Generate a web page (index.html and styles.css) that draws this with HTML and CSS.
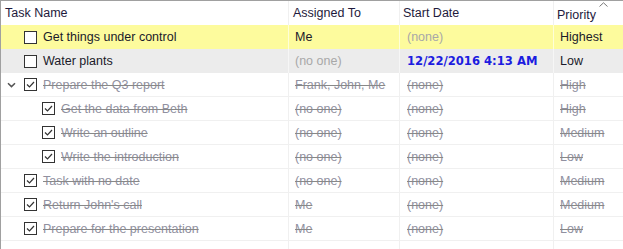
FILE: index.html
```html
<!DOCTYPE html>
<html>
<head>
<meta charset="utf-8">
<link rel="stylesheet" href="styles.css">
</head>
<body>
<div class="grid">
  <div class="row head">
    <div class="c c1">Task Name</div>
    <div class="c c2">Assigned To</div>
    <div class="c c3">Start Date</div>
    <div class="c c4 prio">Priority
      <svg class="sort" width="9" height="5" viewBox="0 0 9 5"><path d="M0.5 4.5 L4.5 0.8 L8.5 4.5" fill="none" stroke="#777" stroke-width="1"/></svg>
    </div>
  </div>

  <div class="row sel">
    <div class="c c1 lv0"><span class="box"></span><span class="t">Get things under control</span></div>
    <div class="c c2"><span class="t">Me</span></div>
    <div class="c c3"><span class="t muted">(none)</span></div>
    <div class="c c4"><span class="t">Highest</span></div>
  </div>

  <div class="row hov">
    <div class="c c1 lv0"><span class="box"></span><span class="t">Water plants</span></div>
    <div class="c c2"><span class="t muted">(no one)</span></div>
    <div class="c c3"><span class="t date">12/22/2016 4:13 AM</span></div>
    <div class="c c4"><span class="t">Low</span></div>
  </div>

  <div class="row done">
    <div class="c c1 lv0 has-toggle">
      <span class="toggle"><svg width="9" height="6" viewBox="0 0 9 6"><path d="M1 1.2 L4.5 4.6 L8 1.2" fill="none" stroke="#555" stroke-width="1.5"/></svg></span>
      <span class="box on"><svg width="11" height="11" viewBox="0 0 11 11"><path d="M2 5.5 L4.5 8 L9 3" fill="none" stroke="#333" stroke-width="1.2"/></svg></span><span class="t">Prepare the Q3 report</span></div>
    <div class="c c2"><span class="t">Frank, John, Me</span></div>
    <div class="c c3"><span class="t">(none)</span></div>
    <div class="c c4"><span class="t">High</span></div>
  </div>

  <div class="row done">
    <div class="c c1 lv1"><span class="box on"><svg width="11" height="11" viewBox="0 0 11 11"><path d="M2 5.5 L4.5 8 L9 3" fill="none" stroke="#333" stroke-width="1.2"/></svg></span><span class="t">Get the data from Beth</span></div>
    <div class="c c2"><span class="t">(no one)</span></div>
    <div class="c c3"><span class="t">(none)</span></div>
    <div class="c c4"><span class="t">High</span></div>
  </div>

  <div class="row done">
    <div class="c c1 lv1"><span class="box on"><svg width="11" height="11" viewBox="0 0 11 11"><path d="M2 5.5 L4.5 8 L9 3" fill="none" stroke="#333" stroke-width="1.2"/></svg></span><span class="t">Write an outline</span></div>
    <div class="c c2"><span class="t">(no one)</span></div>
    <div class="c c3"><span class="t">(none)</span></div>
    <div class="c c4"><span class="t">Medium</span></div>
  </div>

  <div class="row done">
    <div class="c c1 lv1"><span class="box on"><svg width="11" height="11" viewBox="0 0 11 11"><path d="M2 5.5 L4.5 8 L9 3" fill="none" stroke="#333" stroke-width="1.2"/></svg></span><span class="t">Write the introduction</span></div>
    <div class="c c2"><span class="t">(no one)</span></div>
    <div class="c c3"><span class="t">(none)</span></div>
    <div class="c c4"><span class="t">Low</span></div>
  </div>

  <div class="row done">
    <div class="c c1 lv0"><span class="box on"><svg width="11" height="11" viewBox="0 0 11 11"><path d="M2 5.5 L4.5 8 L9 3" fill="none" stroke="#333" stroke-width="1.2"/></svg></span><span class="t">Task with no date</span></div>
    <div class="c c2"><span class="t">(no one)</span></div>
    <div class="c c3"><span class="t">(none)</span></div>
    <div class="c c4"><span class="t">Medium</span></div>
  </div>

  <div class="row done">
    <div class="c c1 lv0"><span class="box on"><svg width="11" height="11" viewBox="0 0 11 11"><path d="M2 5.5 L4.5 8 L9 3" fill="none" stroke="#333" stroke-width="1.2"/></svg></span><span class="t">Return John's call</span></div>
    <div class="c c2"><span class="t">Me</span></div>
    <div class="c c3"><span class="t">(none)</span></div>
    <div class="c c4"><span class="t">Medium</span></div>
  </div>

  <div class="row done">
    <div class="c c1 lv0"><span class="box on"><svg width="11" height="11" viewBox="0 0 11 11"><path d="M2 5.5 L4.5 8 L9 3" fill="none" stroke="#333" stroke-width="1.2"/></svg></span><span class="t">Prepare for the presentation</span></div>
    <div class="c c2"><span class="t">Me</span></div>
    <div class="c c3"><span class="t">(none)</span></div>
    <div class="c c4"><span class="t">Low</span></div>
  </div>

  <div class="row filler">
    <div class="c c1"></div>
    <div class="c c2"></div>
    <div class="c c3"></div>
    <div class="c c4"></div>
  </div>
</div>
</body>
</html>
```

FILE: styles.css
```css
html, body {
  margin: 0;
  padding: 0;
  background: #fff;
}
body {
  width: 623px;
  height: 249px;
  overflow: hidden;
  font-family: "Liberation Sans", Arial, sans-serif;
  font-size: 12.5px;
  color: #1a1a2a;
}
.grid {
  border-top: 1px solid #a0a0a0;
  border-left: 1px solid #a0a0a0;
  height: 248px;
  display: flex;
  flex-direction: column;
}
.row {
  display: flex;
  height: 24px;
  box-sizing: border-box;
  border-bottom: 1px solid #f0f0f0;
  flex: none;
}
.row.head {
  border-bottom: none;
  height: 24px;
  color: #1e1a3c;
}
.row.sel {
  background: #fdfb9d;
  border-bottom: none;
}
.row.hov {
  background: #ececec;
  border-bottom: none;
}
.row.filler {
  flex: 1;
  border-bottom: none;
}
.c {
  display: flex;
  align-items: center;
  box-sizing: border-box;
  border-right: 1px solid #f0f0f0;
  white-space: nowrap;
  overflow: hidden;
  position: relative;
}
.row.sel .c { border-right-color: #fefed8; }
.row.hov .c { border-right-color: #f6f6f6; }
.c1 { width: 288px; padding-left: 4px; }
.c2 { width: 111px; padding-left: 6px; }
.c3 { width: 154px; padding-left: 7px; }
.c4 { flex: 1; padding-left: 6px; border-right: none; }

.head .c2 { padding-left: 4px; }
.head .c3 { padding-left: 3px; }
.head .c4 { padding-left: 3px; padding-top: 4px; }

.c1.lv0 { padding-left: 23px; }
.c1.lv1 { padding-left: 41px; }
.c1.has-toggle { padding-left: 6px; }
.toggle {
  display: flex;
  width: 17px;
  height: 6px;
  align-items: center;
}
.toggle svg { display: block; }

.box {
  width: 13px;
  height: 13px;
  box-sizing: border-box;
  border: 1px solid #333;
  background: #fff;
  display: flex;
  align-items: center;
  justify-content: center;
  flex: none;
  margin-right: 6px;
}
.box svg { display: block; }

.muted { color: #a8a8a8; }
.date {
  color: #1c1ce0;
  font-weight: bold;
  font-family: "DejaVu Sans", sans-serif;
  font-size: 11.6px;
}
.done .t {
  color: #9090a0;
  text-decoration: line-through;
  text-decoration-color: #888;
}
.sort {
  position: absolute;
  left: 45px;
  top: 1px;
}
```
